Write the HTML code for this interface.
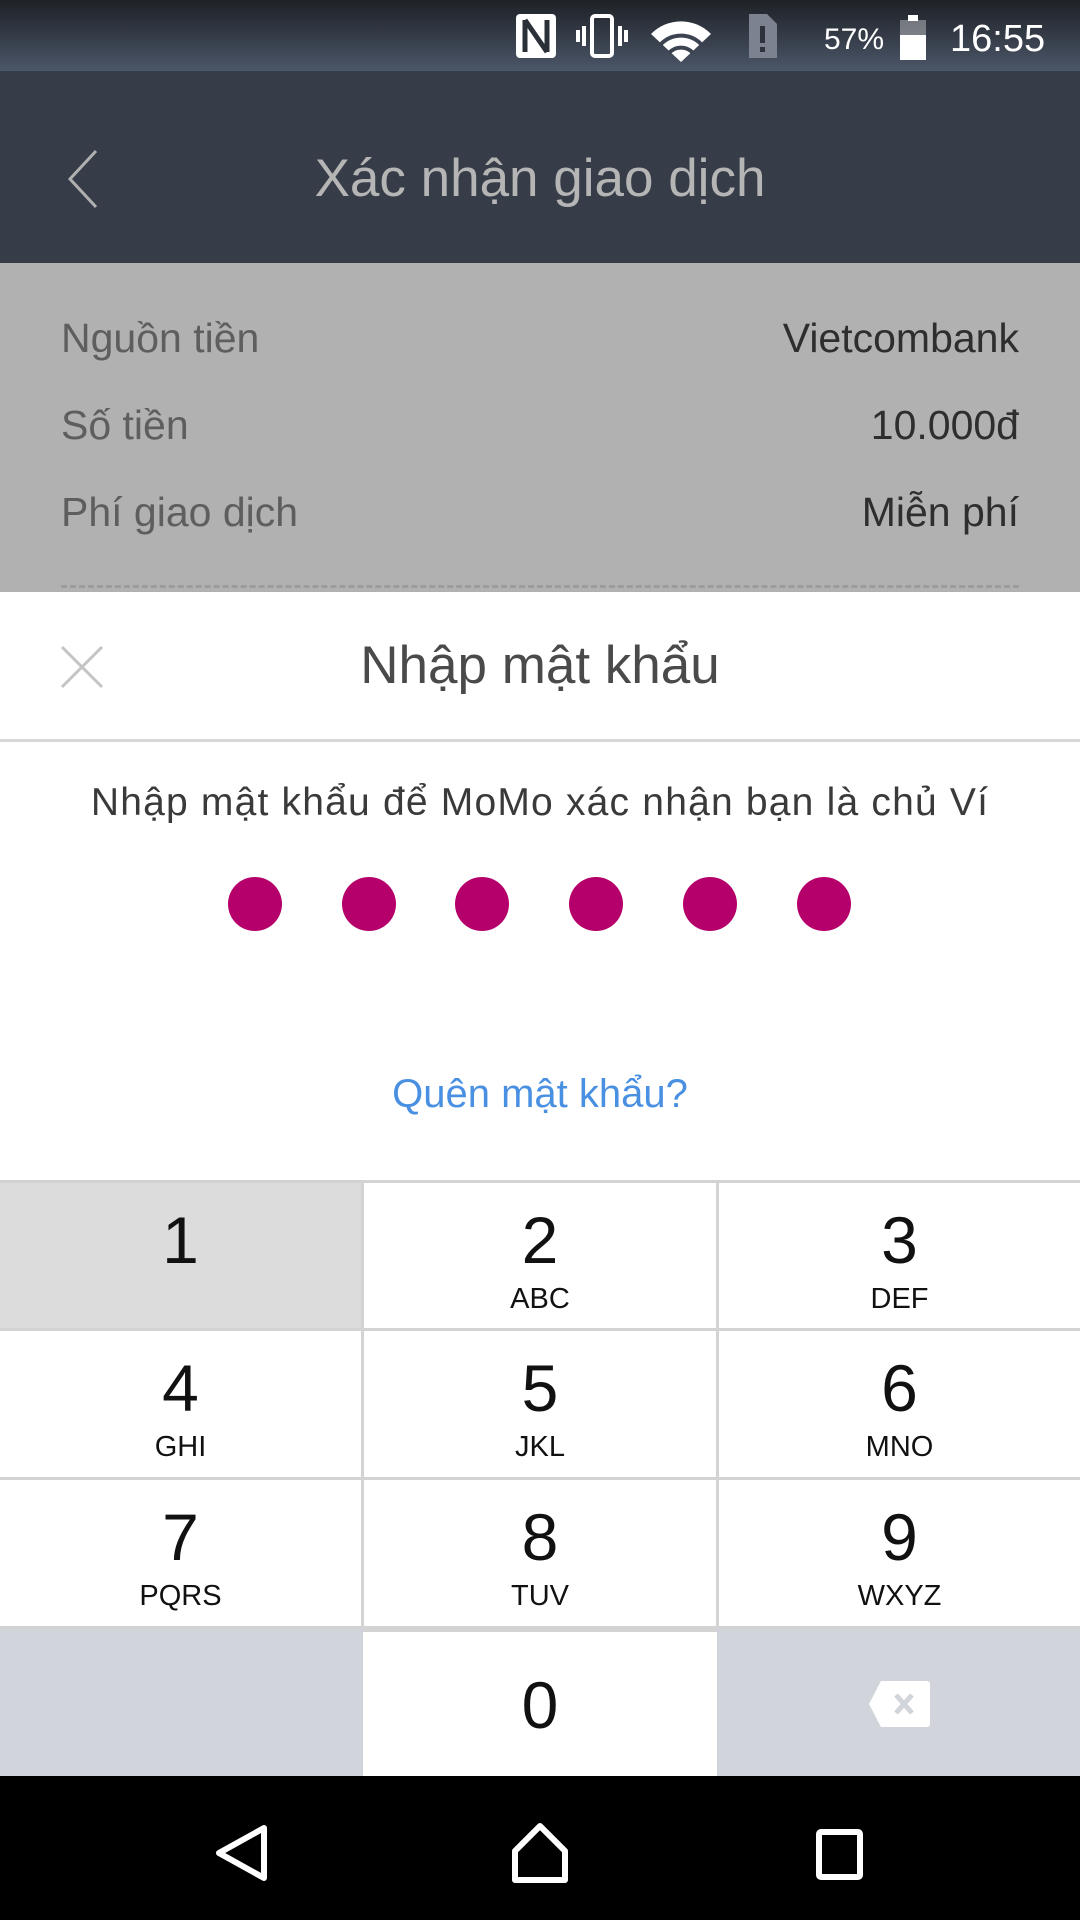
<!DOCTYPE html>
<html><head><meta charset="utf-8"><style>
*{margin:0;padding:0;box-sizing:border-box}
body{width:1080px;height:1920px;position:relative;overflow:hidden;background:#fff;font-family:"Liberation Sans",sans-serif}
.a{position:absolute}
.c{position:absolute;left:0;width:1080px;text-align:center}
.row{position:absolute;font-size:41px;color:#5e5e5e}
.rv{position:absolute;right:61px;font-size:41px;color:#2e2e2e}
.key{position:absolute;text-align:center;color:#111}
.key .d{position:absolute;left:0;right:0;top:22px;font-size:66px;line-height:70px}
.key .l{position:absolute;left:0;right:0;top:100px;font-size:29px;line-height:32px}
.dot{position:absolute;top:877px;width:54px;height:54px;border-radius:50%;background:#b5006b}
</style></head><body>
<div class="a" style="left:0;top:0;width:1080px;height:71px;background:linear-gradient(#1e2126,#4b5668)"></div>
<svg class="a" style="left:512px;top:12px" width="560" height="52" viewBox="0 0 560 52">
<rect x="4" y="2" width="40" height="44" rx="4" fill="#fff"/>
<path d="M13 8v32M13 8l22 32M35 8v32" stroke="#2a2f38" stroke-width="5" fill="none"/>
<rect x="80" y="4" width="20" height="40" rx="3" fill="none" stroke="#fff" stroke-width="4"/>
<path d="M72 14v20M108 14v20M66 18v12M114 18v12" stroke="#fff" stroke-width="4"/>
<path d="M139 22a42 42 0 0 1 60 0l-30 28z" fill="#fff"/>
<path d="M149 32a28 28 0 0 1 40 0" stroke="#3c4452" stroke-width="4" fill="none"/>
<path d="M157 41a16 16 0 0 1 24 0" stroke="#3c4452" stroke-width="4" fill="none"/>
<path d="M237 2h18l10 10v34h-28z" fill="#7c8290"/>
<rect x="248" y="14" width="5" height="17" fill="#2d323c"/><rect x="248" y="35" width="5" height="5" fill="#2d323c"/>
<text x="312" y="37" fill="#fff" font-size="30" font-family="Liberation Sans">57%</text>
<rect x="388" y="8" width="26" height="40" fill="#fff" opacity=".35"/><rect x="396" y="3" width="10" height="6" fill="#fff"/>
<rect x="388" y="23" width="26" height="25" fill="#fff"/>
<text x="438" y="39" fill="#fff" font-size="38" font-family="Liberation Sans">16:55</text>
</svg>
<div class="a" style="left:0;top:71px;width:1080px;height:192px;background:#373d48"></div>
<svg class="a" style="left:62px;top:148px" width="40" height="62"><path d="M34 3L8 31l26 28" stroke="#b0b0b0" stroke-width="3" fill="none"/></svg>
<div class="c" style="top:148px;font-size:53px;line-height:62px;color:#b5b5b5">Xác nhận giao dịch</div>
<div class="a" style="left:0;top:263px;width:1080px;height:329px;background:#b1b1b1"></div>
<div class="row" style="left:61px;top:315px">Nguồn tiền</div><div class="rv" style="top:315px">Vietcombank</div>
<div class="row" style="left:61px;top:402px">Số tiền</div><div class="rv" style="top:402px">10.000đ</div>
<div class="row" style="left:61px;top:489px">Phí giao dịch</div><div class="rv" style="top:489px">Miễn phí</div>
<div class="a" style="left:61px;top:585px;width:958px;border-top:3px dashed #9c9c9c"></div>
<svg class="a" style="left:60px;top:645px" width="44" height="44"><path d="M2 2l40 40M42 2L2 42" stroke="#c4c4c4" stroke-width="3"/></svg>
<div class="c" style="top:635px;font-size:53px;line-height:62px;color:#4a4a4a">Nhập mật khẩu</div>
<div class="a" style="left:0;top:739px;width:1080px;height:3px;background:#d8d8d8"></div>
<div class="c" style="top:780px;font-size:39px;line-height:46px;color:#3a3a3a;letter-spacing:1.2px">Nhập mật khẩu để MoMo xác nhận bạn là chủ Ví</div>
<div class="dot" style="left:228px"></div><div class="dot" style="left:342px"></div><div class="dot" style="left:455px"></div>
<div class="dot" style="left:569px"></div><div class="dot" style="left:683px"></div><div class="dot" style="left:797px"></div>
<div class="c" style="top:1070px;font-size:40px;line-height:48px;color:#4a90e2">Quên mật khẩu?</div>
<div class="a" style="left:0;top:1180px;width:1080px;height:596px;background:#d3d3d3"></div>
<div class="key" style="left:0;top:1183px;width:361px;height:145px;background:#dcdcdc"><div class="d">1</div></div>
<div class="key" style="left:364px;top:1183px;width:352px;height:145px;background:#fff"><div class="d">2</div><div class="l">ABC</div></div>
<div class="key" style="left:719px;top:1183px;width:361px;height:145px;background:#fff"><div class="d">3</div><div class="l">DEF</div></div>
<div class="key" style="left:0;top:1331px;width:361px;height:146px;background:#fff"><div class="d">4</div><div class="l">GHI</div></div>
<div class="key" style="left:364px;top:1331px;width:352px;height:146px;background:#fff"><div class="d">5</div><div class="l">JKL</div></div>
<div class="key" style="left:719px;top:1331px;width:361px;height:146px;background:#fff"><div class="d">6</div><div class="l">MNO</div></div>
<div class="key" style="left:0;top:1480px;width:361px;height:146px;background:#fff"><div class="d">7</div><div class="l">PQRS</div></div>
<div class="key" style="left:364px;top:1480px;width:352px;height:146px;background:#fff"><div class="d">8</div><div class="l">TUV</div></div>
<div class="key" style="left:719px;top:1480px;width:361px;height:146px;background:#fff"><div class="d">9</div><div class="l">WXYZ</div></div>
<div class="key" style="left:0;top:1629px;width:363px;height:147px;background:#d1d4da"></div>
<div class="key" style="left:363px;top:1632px;width:354px;height:144px;background:#fff"><div class="d" style="top:38px">0</div></div>
<div class="key" style="left:717px;top:1629px;width:363px;height:147px;background:#d1d4da">
<svg class="a" style="left:152px;top:52px" width="62" height="46"><path d="M12 0h46a3 3 0 0 1 3 3v40a3 3 0 0 1-3 3H12L0 23z" fill="#fff"/><path d="M27 14l16 18M43 14L27 32" stroke="#d1d4da" stroke-width="5"/></svg></div>
<div class="a" style="left:0;top:1776px;width:1080px;height:144px;background:#000"></div>
<svg class="a" style="left:0;top:1776px" width="1080" height="144">
<path d="M264 52v50L219 77z" stroke="#fff" stroke-width="6" fill="none" stroke-linejoin="round"/>
<path d="M540 50l-25 25v29h50v-29z" stroke="#fff" stroke-width="6" fill="none" stroke-linejoin="round"/>
<rect x="819" y="56" width="41" height="45" rx="2" stroke="#fff" stroke-width="6" fill="none"/>
</svg>
</body></html>
